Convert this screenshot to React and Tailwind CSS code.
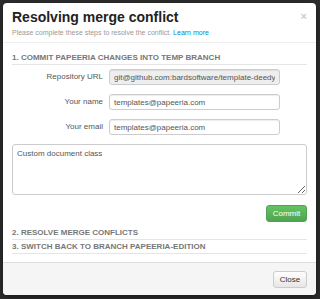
import React from "react";

const font = { fontFamily: '"Liberation Sans", Arial, sans-serif' };

const Field = ({ label, value, disabled }) => (
  <div className="flex items-center h-[16px]">
    <label className="w-[97px] pr-[6px] text-right text-[8px] text-[#555]">{label}</label>
    <input
      readOnly
      value={value}
      className={`w-[171px] h-[16px] px-[4px] text-[8px] text-[#555] border border-[#ccc] rounded-[3px] shadow-[inset_0_1px_1px_rgba(0,0,0,0.075)] outline-none ${
        disabled ? "bg-[#eeeeee]" : "bg-white"
      }`}
    />
  </div>
);

const SectionTitle = ({ children, className = "" }) => (
  <div className={`border-b border-[#e5e5e5] text-[8px] font-bold text-[#777] leading-[8px] pt-[3px] pb-[2px] ${className}`}>
    {children}
  </div>
);

export default function App() {
  return (
    <div className="w-[320px] h-[299px] bg-[#2d2d2d] pt-[3px] pl-[3px]" style={font}>
      <div className="w-[313px] h-[292px] bg-white rounded-[4px] flex flex-col overflow-hidden shadow-[0_2px_6px_rgba(0,0,0,0.5)]">
        {/* Header */}
        <div className="relative h-[40px] border-b border-[#eee] px-[9px] pt-[6px]">
          <h3 className="text-[14px] font-bold text-[#222] leading-[17px]">Resolving merge conflict</h3>
          <p className="text-[7px] text-[#999] leading-[9px] mt-[2px]">
            Please complete these steps to resolve the conflict.{" "}
            <a className="text-[#0088cc]">Learn more</a>
          </p>
          <span className="absolute right-[9px] top-[8px] text-[11px] font-bold text-[#ccc] leading-none">×</span>
        </div>

        {/* Body */}
        <div className="flex-1 px-[9px] pt-[8px]">
          <SectionTitle>1. COMMIT PAPEERIA CHANGES INTO TEMP BRANCH</SectionTitle>
          <div className="flex flex-col gap-[9px] mt-[4px]">
            <Field label="Repository URL" value="git@github.com:bardsoftware/template-deedy-" disabled />
            <Field label="Your name" value="templates@papeeria.com" />
            <Field label="Your email" value="templates@papeeria.com" />
          </div>
          <textarea
            readOnly
            value="Custom document class"
            className="block mt-[9px] w-[295px] h-[51px] border border-[#ccc] rounded-[3px] px-[4px] py-[3px] text-[8px] text-[#555] resize-y outline-none"
          />
          <div className="flex justify-end mt-[10px]">
            <button className="h-[17px] w-[41px] text-[8px] text-white rounded-[3px] border border-[#51a351] bg-gradient-to-b from-[#62c462] to-[#51a351]">
              Commit
            </button>
          </div>
          <SectionTitle className="mt-[4px]">2. RESOLVE MERGE CONFLICTS</SectionTitle>
          <SectionTitle>3. SWITCH BACK TO BRANCH PAPEERIA-EDITION</SectionTitle>
        </div>

        {/* Footer */}
        <div className="h-[33px] bg-[#f5f5f5] border-t border-[#ddd] flex items-start justify-end px-[9px] pt-[8px]">
          <button className="h-[17px] w-[34px] text-[8px] text-[#333] rounded-[3px] border border-[#ccc] bg-gradient-to-b from-white to-[#e6e6e6]">
            Close
          </button>
        </div>
      </div>
    </div>
  );
}
